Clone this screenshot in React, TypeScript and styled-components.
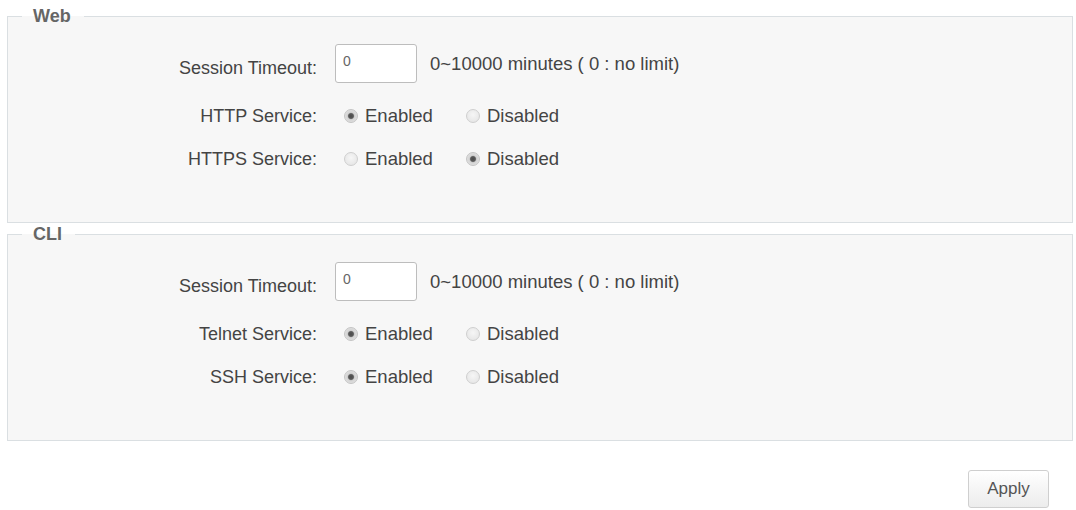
import React from "react";
import styled, { createGlobalStyle } from "styled-components";

const GlobalStyle = createGlobalStyle`
  html, body {
    margin: 0;
    padding: 0;
    background: #ffffff;
  }
  body {
    font-family: "Liberation Sans", Arial, sans-serif;
    color: #444;
  }
`;

const Page = styled.div`
  display: flex;
  flex-direction: column;
  padding: 6px 3px 0 7px;
  width: 1076px;
  height: 510px;
  box-sizing: border-box;
`;

const Group = styled.fieldset`
  margin: 0;
  min-width: 0;
  padding: 18px 14px 53px;
  border: 1px solid #dadfe2;
  background: #f7f7f7;

  & + & {
    margin-top: 1px;
  }
`;

const Legend = styled.legend`
  padding: 0 13px 0 11px;
  font-size: 18px;
  line-height: 20px;
  font-weight: bold;
  color: #666;
`;

const Form = styled.div`
  display: grid;
  grid-template-columns: 295px 1fr;
  column-gap: 18px;
  row-gap: 23px;
  align-items: center;
`;

const Label = styled.div<{ $lowered?: boolean }>`
  text-align: right;
  font-size: 18px;
  line-height: 20px;
  color: #444;
  align-self: ${(p) => (p.$lowered ? "end" : "center")};
  margin-bottom: ${(p) => (p.$lowered ? "5px" : "0")};
`;

const Control = styled.div`
  display: flex;
  align-items: center;
  min-height: 20px;
`;

const TimeoutInput = styled.input`
  box-sizing: border-box;
  width: 82px;
  height: 39px;
  padding: 5px 7px 10px;
  border: 1px solid #bdbdbd;
  border-radius: 3px;
  background: #fff;
  font-family: "Liberation Sans", Arial, sans-serif;
  font-size: 14px;
  color: #666;
  outline: none;
`;

const Hint = styled.span`
  margin-left: 13px;
  font-size: 18.5px;
  line-height: 20px;
  color: #444;
`;

const Option = styled.label`
  display: inline-flex;
  align-items: center;
  width: 122px;
  font-size: 18.5px;
  line-height: 20px;
  color: #444;
  cursor: pointer;

  &:first-child {
    margin-left: 9px;
  }
`;

const Radio = styled.input.attrs({ type: "radio" })`
  appearance: none;
  -webkit-appearance: none;
  box-sizing: border-box;
  width: 14px;
  height: 14px;
  margin: 0 7px 0 0;
  border: 1px solid #cfcfcf;
  border-radius: 50%;
  background: radial-gradient(circle at 50% 40%, #f6f6f6 0%, #e2e2e2 100%);
  flex: none;

  &:checked {
    background: radial-gradient(
      circle,
      #4a4a4a 0,
      #5a5a5a 2.4px,
      #d2d2d2 3.6px,
      #ececec 100%
    );
    border-color: #c4c4c4;
  }
`;

const ApplyButton = styled.button`
  align-self: flex-end;
  margin: 29px 24px 0 0;
  width: 81px;
  height: 38px;
  border: 1px solid #cfcfcf;
  border-radius: 3px;
  background: linear-gradient(#ffffff, #ececec);
  font-family: "Liberation Sans", Arial, sans-serif;
  font-size: 17px;
  color: #555;
`;

type ServiceRow = { name: string; label: string; enabled: boolean };

const TimeoutRow = ({ id }: { id: string }) => (
  <>
    <Label $lowered>Session Timeout:</Label>
    <Control>
      <TimeoutInput id={id} defaultValue="0" />
      <Hint>0~10000 minutes ( 0 : no limit)</Hint>
    </Control>
  </>
);

const ServiceToggle = ({ row }: { row: ServiceRow }) => (
  <>
    <Label>{row.label}</Label>
    <Control>
      <Option>
        <Radio name={row.name} defaultChecked={row.enabled} />
        Enabled
      </Option>
      <Option>
        <Radio name={row.name} defaultChecked={!row.enabled} />
        Disabled
      </Option>
    </Control>
  </>
);

const groups: { title: string; id: string; rows: ServiceRow[] }[] = [
  {
    title: "Web",
    id: "web-timeout",
    rows: [
      { name: "http", label: "HTTP Service:", enabled: true },
      { name: "https", label: "HTTPS Service:", enabled: false },
    ],
  },
  {
    title: "CLI",
    id: "cli-timeout",
    rows: [
      { name: "telnet", label: "Telnet Service:", enabled: true },
      { name: "ssh", label: "SSH Service:", enabled: true },
    ],
  },
];

export default function App() {
  return (
    <>
      <GlobalStyle />
      <Page>
        {groups.map((g) => (
          <Group key={g.title}>
            <Legend>{g.title}</Legend>
            <Form>
              <TimeoutRow id={g.id} />
              {g.rows.map((r) => (
                <ServiceToggle key={r.name} row={r} />
              ))}
            </Form>
          </Group>
        ))}
        <ApplyButton>Apply</ApplyButton>
      </Page>
    </>
  );
}
